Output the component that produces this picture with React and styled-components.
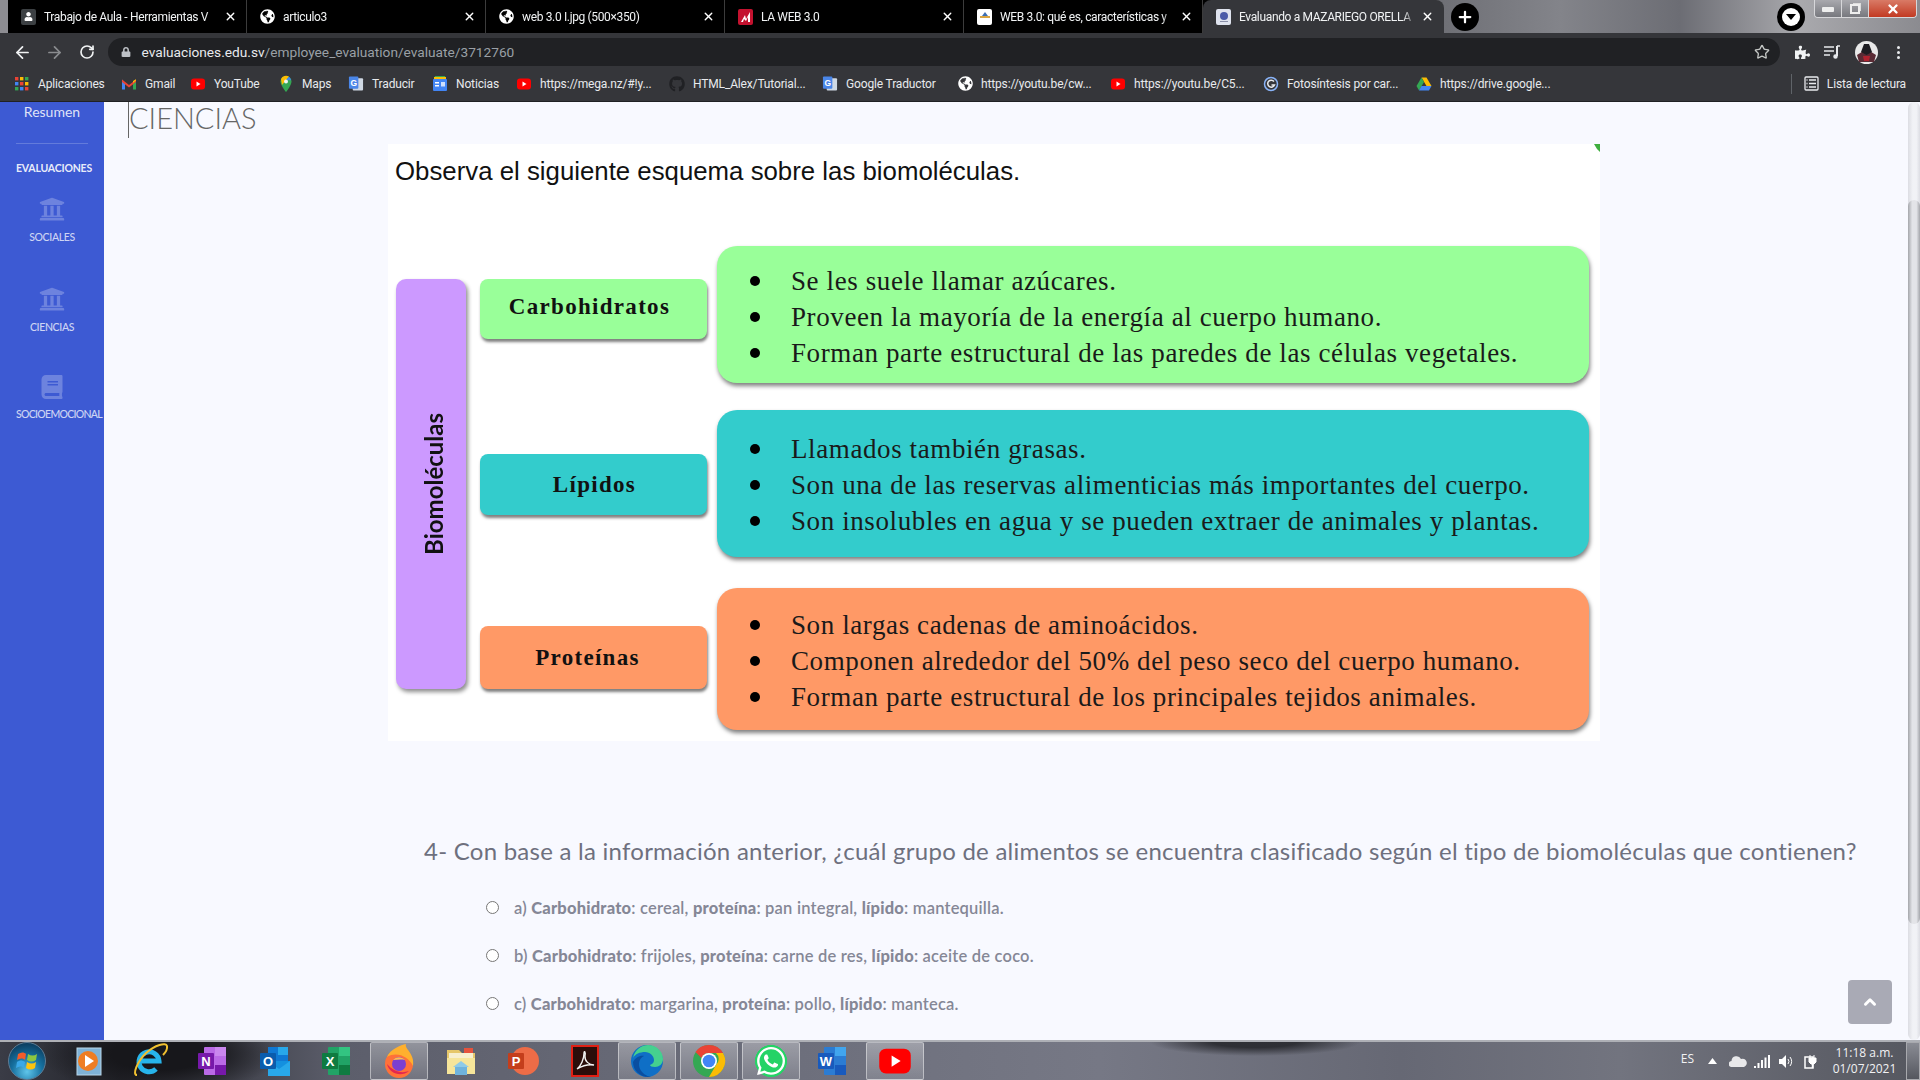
import React from "react";
import styled, { createGlobalStyle } from "styled-components";
import { ArrowLeft, ArrowRight, RotateCw, Star, X, Plus, ChevronUp } from "lucide-react";
import {
  FaUniversity,
  FaBook,
  FaGithub,
  FaGlobeAmericas,
  FaLock,
  FaPuzzlePiece,
  FaWhatsapp,
  FaUser,
} from "react-icons/fa";

const GlobalStyle = createGlobalStyle`
  html, body {
    margin: 0;
    padding: 0;
    background: #f8f9ff;
    overflow: hidden;
  }
  * { box-sizing: border-box; }
`;

const uiFont = `Roboto, "Liberation Sans", sans-serif`;
const pageFont = `Lato, "Open Sans", sans-serif`;

/* ---------- small drawn icons ---------- */

function YtIcon({ size = 16 }) {
  return (
    <svg width={size} height={size} viewBox="0 0 16 16">
      <rect x="1" y="2.5" width="14" height="11" rx="3" fill="#f00" />
      <path d="M6.5 5.5v5l4-2.5z" fill="#fff" />
    </svg>
  );
}

function AppsIcon() {
  const colors = ["#ea4335", "#fbbc05", "#34a853", "#4285f4", "#ea4335", "#fbbc05", "#34a853", "#4285f4", "#ea4335"];
  return (
    <svg width="16" height="16" viewBox="0 0 16 16">
      {colors.map((c, i) => (
        <rect key={i} x={1 + (i % 3) * 5} y={1 + Math.floor(i / 3) * 5} width="3.4" height="3.4" fill={c} />
      ))}
    </svg>
  );
}

function GmailIcon() {
  return (
    <svg width="16" height="16" viewBox="0 0 16 16">
      <path d="M1 3.5v10h3V7z" fill="#4285f4" />
      <path d="M15 3.5v10h-3V7z" fill="#34a853" />
      <path d="M1 3.5 8 9l7-5.5V6L8 11.5 1 6z" fill="#ea4335" />
      <path d="M12 7l3-2.5V3.2L12 5z" fill="#fbbc05" />
    </svg>
  );
}

function MapsIcon() {
  return (
    <svg width="16" height="18" viewBox="0 0 16 18">
      <path d="M8 1a5.5 5.5 0 0 0-5.5 5.5C2.500 10.500 8 17 8 17s5.500-6.500 5.500-10.500A5.500 5.500 0 0 0 8 1z" fill="#34a853" />
      <path d="M3 4a5.500 5.500 0 0 1 8-2.400L4 10z" fill="#fbbc05" />
      <path d="M11 1.800 8 5l5 .2a5.500 5.500 0 0 0-2-3.400z" fill="#4285f4" />
      <circle cx="8" cy="6.500" r="2" fill="#f1f3f4" />
    </svg>
  );
}

function TranslateIcon() {
  return (
    <svg width="17" height="17" viewBox="0 0 17 17">
      <rect x="5" y="3" width="11" height="13" rx="1" fill="#cfd8e3" />
      <rect x="1" y="1" width="10" height="13" rx="1" fill="#4a86e8" />
      <text x="6" y="11" fontSize="9" fontWeight="700" fill="#fff" textAnchor="middle" fontFamily="Liberation Sans">G</text>
    </svg>
  );
}

function NewsIcon() {
  return (
    <svg width="16" height="17" viewBox="0 0 16 17">
      <path d="M3 1h10l1 4H2z" fill="#34a853" />
      <path d="M2 2h12v3H2z" fill="#fbbc05" />
      <rect x="1" y="4" width="14" height="12" rx="1" fill="#4285f4" />
      <rect x="3" y="7" width="4" height="1.500" fill="#fff" />
      <rect x="3" y="10" width="4" height="1.500" fill="#fff" />
      <rect x="9" y="7" width="4" height="4.500" fill="#cfe0fc" />
    </svg>
  );
}

function GoogleLensIcon() {
  return (
    <svg width="16" height="16" viewBox="0 0 16 16" fill="none">
      <circle cx="8" cy="8" r="6.500" stroke="#8ab4f8" strokeWidth="1.500" />
      <path d="M11 5.500A3.500 3.500 0 1 0 11.500 9H8.500" stroke="#e8eaed" strokeWidth="1.500" />
    </svg>
  );
}

function DriveIcon() {
  return (
    <svg width="16" height="16" viewBox="0 0 16 16">
      <path d="M5.500 1.500h5L15.500 10h-5z" fill="#fbbc05" />
      <path d="M5.500 1.500 .5 10 3 14.500 8 6z" fill="#34a853" />
      <path d="M3 14.500h10l2.500-4.500h-10z" fill="#4285f4" />
    </svg>
  );
}

function ReadingIcon() {
  return (
    <svg width="15" height="15" viewBox="0 0 15 15" fill="none" stroke="#e8eaed" strokeWidth="1.300">
      <rect x="1" y="1" width="13" height="13" rx="1" />
      <path d="M5 4h7M5 7.500h7M5 11h7M2.500 4h1M2.500 7.500h1M2.500 11h1" />
    </svg>
  );
}

function MediaIcon() {
  return (
    <svg width="16" height="14" viewBox="0 0 16 14" fill="none" stroke="#e8eaed" strokeWidth="1.500">
      <path d="M0 2h10M0 6h10M0 10h6" />
      <path d="M13 1v10" strokeWidth="2" />
      <circle cx="11.500" cy="11.500" r="1.500" fill="#e8eaed" />
      <path d="M13 1h3" />
    </svg>
  );
}

function Avatar() {
  return (
    <AvatarWrap>
      <svg width="23" height="23" viewBox="0 0 23 23">
        <circle cx="11.500" cy="11.500" r="11.500" fill="#e9e9e9" />
        <path d="M2 14 11.500 8 21 14l-2 7H4z" fill="#5a2b35" />
        <path d="M9 3h5l3 8-5.500 3L6 11z" fill="#1d1d22" />
        <path d="M8 15h7l-1 5H9z" fill="#b0222f" />
      </svg>
    </AvatarWrap>
  );
}

function OfficeIcon({ letter, dark, mid, light, round }) {
  return (
    <svg width="34" height="34" viewBox="0 0 34 34">
      {round ? (
        <circle cx="19" cy="17" r="14" fill={mid} />
      ) : (
        <>
          <rect x="8" y="3" width="22" height="28" rx="1" fill={mid} />
          <rect x="19" y="3" width="11" height="9" fill={light} />
          <rect x="19" y="21" width="11" height="10" fill={dark} />
        </>
      )}
      <rect x="2" y="9" width="16" height="16" rx="1" fill={dark} />
      <text x="10" y="22" fontSize="13" fontWeight="700" fill="#fff" textAnchor="middle" fontFamily="Liberation Sans">
        {letter}
      </text>
    </svg>
  );
}

function OutlookIcon() {
  return (
    <svg width="34" height="34" viewBox="0 0 34 34">
      <rect x="10" y="3" width="20" height="16" fill="#0f78d4" />
      <rect x="20" y="3" width="10" height="8" fill="#28a8ea" />
      <path d="M10 17h22v15H10z" fill="#1490df" />
      <path d="M10 17 21 25l11-8v15H10z" fill="#28a8ea" />
      <rect x="2" y="9" width="16" height="16" rx="1" fill="#0a5cad" />
      <text x="10" y="22" fontSize="13" fontWeight="700" fill="#fff" textAnchor="middle" fontFamily="Liberation Sans">O</text>
    </svg>
  );
}

function FirefoxIcon() {
  return (
    <svg width="36" height="36" viewBox="0 0 36 36">
      <circle cx="18" cy="21" r="14" fill="#ff7139" />
      <path d="M6 14C9 6 20 2 25 1c-2 5 9 9 7 22C28 14 16 8 6 14z" fill="#ffb02e" />
      <path d="M6 21c2 9 14 14 22 7-8 3-16 0-22-7z" fill="#e22850" />
      <circle cx="18" cy="21" r="7" fill="#7b3fd1" />
      <path d="M12 17c4-4 9-3 12 0-4-1-8 0-12 0z" fill="#ffbd4f" />
    </svg>
  );
}

function ExplorerIcon() {
  return (
    <svg width="34" height="34" viewBox="0 0 34 34">
      <path d="M3 6h12l3 3h13v21H3z" fill="#e6c76a" />
      <path d="M5 9h24v6H5z" fill="#f7efcf" />
      <rect x="20" y="4" width="9" height="5" fill="#e5533d" />
      <path d="M3 14h28v16H3z" fill="#f6e59a" />
      <path d="M11 22h12v9H11z" fill="#6fb3dd" />
      <path d="M9 23l8-6 8 6z" fill="#8ecbe9" />
    </svg>
  );
}

function AcrobatIcon() {
  return (
    <svg width="30" height="34" viewBox="0 0 30 34">
      <rect x="2" y="2" width="26" height="30" fill="#2b0d0a" stroke="#e01f14" strokeWidth="2" />
      <path d="M7 25c4-3 7-10 7-16 0-3 2-1 1 3-.5 5 4 9 9 9-6-1-12 1-17 4z" fill="none" stroke="#f4f4f4" strokeWidth="1.300" />
    </svg>
  );
}

function EdgeIcon() {
  return (
    <svg width="36" height="36" viewBox="0 0 36 36">
      <circle cx="18" cy="18" r="16" fill="#0f6fc6" />
      <path d="M4 15C6 6 13 2 19 2c9 0 15 7 15 14 0 5-4 8-8 8-3 0-5-1-5-2 3-1 4-3 4-5 0-4-4-8-9-8S6 11 4 15z" fill="#45d08f" />
      <path d="M15 13c-5 2-6 8-4 13 2 4 6 7 11 8-10 1-18-6-18-15 2-4 7-7 11-6z" fill="#0a4ea0" />
    </svg>
  );
}

function ChromeIcon() {
  return (
    <svg width="36" height="36" viewBox="0 0 36 36">
      <circle cx="18" cy="18" r="16" fill="#34a853" />
      <path d="M18 2a16 16 0 0 1 14 8H18a8 8 0 0 0-7.500 5L4.500 9A16 16 0 0 1 18 2z" fill="#ea4335" />
      <path d="M32 10a16 16 0 0 1-14 24l7-12a8 8 0 0 0 0-12z" fill="#fbbc05" />
      <circle cx="18" cy="18" r="8" fill="#fff" />
      <circle cx="18" cy="18" r="6.300" fill="#4285f4" />
    </svg>
  );
}

function Tray({ kind }) {
  if (kind === "arrow") {
    return (
      <svg width="9" height="6" viewBox="0 0 9 6">
        <path d="M0 6 4.500 0 9 6z" fill="#fff" />
      </svg>
    );
  }
  if (kind === "cloud") {
    return (
      <svg width="18" height="12" viewBox="0 0 18 12">
        <path d="M3 12a3 3 0 0 1-.5-6A5 5 0 0 1 12 4a4 4 0 0 1 3 8z" fill="#e8e8ea" />
      </svg>
    );
  }
  if (kind === "signal") {
    return (
      <svg width="16" height="13" viewBox="0 0 16 13" fill="#fff">
        <rect x="0" y="11" width="2" height="2" />
        <rect x="3.500" y="8" width="2" height="5" />
        <rect x="7" y="5" width="2" height="8" />
        <rect x="10.500" y="2.500" width="2" height="10.500" />
        <rect x="14" y="0" width="2" height="13" />
      </svg>
    );
  }
  if (kind === "sound") {
    return (
      <svg width="15" height="15" viewBox="0 0 15 15" fill="none">
        <path d="M1 5h3l4-4v13l-4-4H1z" fill="#fff" />
        <path d="M10 5a4 4 0 0 1 0 5M12 3a7 7 0 0 1 0 9" stroke="#fff" />
      </svg>
    );
  }
  return (
    <svg width="15" height="15" viewBox="0 0 15 15" fill="none">
      <path d="M2 3h8v11H2z" stroke="#fff" strokeWidth="1.500" />
      <path d="M7 1v3M11 1v3M6 4h7v4l-2 2H8L6 8z" fill="#fff" stroke="#fff" />
      <path d="M9.500 10v4" stroke="#fff" strokeWidth="1.500" />
    </svg>
  );
}

/* ---------- data ---------- */

const tabs = [
  { title: "Trabajo de Aula - Herramientas V", icon: "person" },
  { title: "articulo3", icon: "globe" },
  { title: "web 3.0 I.jpg (500×350)", icon: "globe" },
  { title: "LA WEB 3.0", icon: "red" },
  { title: "WEB 3.0: qué es, características y", icon: "white" },
  { title: "Evaluando a MAZARIEGO ORELLA", icon: "seal", active: true },
];

const bookmarks = [
  { label: "Aplicaciones", icon: <AppsIcon />, w: 107 },
  { label: "Gmail", icon: <GmailIcon />, w: 69 },
  { label: "YouTube", icon: <YtIcon />, w: 88 },
  { label: "Maps", icon: <MapsIcon />, w: 70 },
  { label: "Traducir", icon: <TranslateIcon />, w: 84 },
  { label: "Noticias", icon: <NewsIcon />, w: 84 },
  { label: "https://mega.nz/#!y...", icon: <YtIcon />, w: 153 },
  { label: "HTML_Alex/Tutorial...", icon: <FaGithub size={16} color="#202124" />, w: 153 },
  { label: "Google Traductor", icon: <TranslateIcon />, w: 135 },
  { label: "https://youtu.be/cw...", icon: <FaGlobeAmericas size={15} color="#fff" />, w: 153 },
  { label: "https://youtu.be/C5...", icon: <YtIcon />, w: 153 },
  { label: "Fotosíntesis por car...", icon: <GoogleLensIcon />, w: 153 },
  { label: "https://drive.google...", icon: <DriveIcon />, w: 150 },
];

const sideItems = [
  { label: "SOCIALES", icon: <FaUniversity size={26} /> },
  { label: "CIENCIAS", icon: <FaUniversity size={26} /> },
  { label: "SOCIOEMOCIONAL", icon: <FaBook size={24} />, wide: true },
];

const groups = [
  {
    name: "Carbohidratos",
    color: "#99ff99",
    top: 0,
    height: 137,
    offset: 33,
    nameHeight: 60,
    nudgeX: -4,
    nudgeY: -2,
    pad: 5,
    points: [
      "Se les suele llamar azúcares.",
      "Proveen la mayoría de la energía al cuerpo humano.",
      "Forman parte estructural de las paredes de las células vegetales.",
    ],
  },
  {
    name: "Lípidos",
    color: "#33cccc",
    top: 27,
    height: 147,
    offset: 44,
    nameHeight: 61,
    nudgeX: 1,
    nudgeY: 0,
    pad: 3,
    points: [
      "Llamados también grasas.",
      "Son una de las reservas alimenticias más importantes del cuerpo.",
      "Son insolubles en agua y se pueden extraer de animales y plantas.",
    ],
  },
  {
    name: "Proteínas",
    color: "#ff9966",
    top: 31,
    height: 142,
    offset: 38,
    nameHeight: 63,
    nudgeX: -6,
    nudgeY: 0,
    pad: 3,
    points: [
      "Son largas cadenas de aminoácidos.",
      "Componen alrededor del 50% del peso seco del cuerpo humano.",
      "Forman parte estructural de los principales tejidos animales.",
    ],
  },
];

const options = [
  { letter: "a)", carb: "cereal", prot: "pan integral", lip: "mantequilla" },
  { letter: "b)", carb: "frijoles", prot: "carne de res", lip: "aceite de coco" },
  { letter: "c)", carb: "margarina", prot: "pollo", lip: "manteca" },
];

const taskbarApps = [
  { key: "wmp", el: <MediaPlayer /> },
  { key: "ie", el: <IeIcon /> },
  { key: "one", el: <OfficeIcon letter="N" dark="#7719aa" mid="#ba6ae6" light="#ca87ee" /> },
  { key: "out", el: <OutlookIcon /> },
  { key: "xls", el: <OfficeIcon letter="X" dark="#0f7b41" mid="#21a366" light="#33c481" /> },
  { key: "ff", el: <FirefoxIcon />, active: true },
  { key: "exp", el: <ExplorerIcon /> },
  { key: "ppt", el: <OfficeIcon letter="P" dark="#c43e1c" mid="#ed6c47" light="#ff8f6b" round /> },
  { key: "pdf", el: <AcrobatIcon /> },
  { key: "edge", el: <EdgeIcon />, active: true },
  { key: "chr", el: <ChromeIcon />, active: true },
  { key: "wa", el: <WaIcon />, active: true },
  { key: "word", el: <OfficeIcon letter="W" dark="#185abd" mid="#2b7cd3" light="#41a5ee" /> },
  { key: "yt", el: <YtIcon size={36} />, active: true },
];

function MediaPlayer() {
  return (
    <svg width="30" height="32" viewBox="0 0 30 32">
      <rect x="3" y="3" width="24" height="27" fill="#7fb2d6" stroke="#b9d7ea" />
      <circle cx="14" cy="16" r="10" fill="#ee7d23" />
      <path d="M11 10v12l9-6z" fill="#fff" />
    </svg>
  );
}

function IeIcon() {
  return (
    <svg width="38" height="38" viewBox="0 0 38 38" fill="none">
      <path d="M6 19h21a10 10 0 1 0-3 8" stroke="#27b4ea" strokeWidth="5" />
      <path d="M5 33C0 33 5 20 14 11 23 3 34 0 35 4c.5 3-2 7-4 9" stroke="#f0c030" strokeWidth="2" />
    </svg>
  );
}

function WaIcon() {
  return (
    <WaBadge>
      <FaWhatsapp size={32} color="#fff" />
    </WaBadge>
  );
}

function TabFavicon({ kind }) {
  if (kind === "globe") return <FaGlobeAmericas size={15} color="#fff" />;
  if (kind === "person") {
    return (
      <FavBox $bg="#3c4043">
        <FaUser size={9} color="#fff" />
      </FavBox>
    );
  }
  if (kind === "red") {
    return (
      <FavBox $bg="#c4122f">
        <svg width="12" height="12" viewBox="0 0 12 12">
          <path d="M1 11 5 4l1 4 4-7v10H8V6L6 10 4 8l-1 3z" fill="#fff" />
        </svg>
      </FavBox>
    );
  }
  if (kind === "white") {
    return (
      <FavBox $bg="#fff">
        <svg width="14" height="14" viewBox="0 0 14 14">
          <path d="M7 2 4 6h6z" fill="#3d6fb4" />
          <rect x="2" y="6" width="10" height="2" fill="#d9a441" />
        </svg>
      </FavBox>
    );
  }
  return (
    <FavBox $bg="#dfe3ee">
      <svg width="12" height="12" viewBox="0 0 12 12">
        <circle cx="6" cy="5" r="4" fill="#4a5aa8" />
        <rect x="2" y="10" width="8" height="1" fill="#8a8fa8" />
      </svg>
    </FavBox>
  );
}

/* ---------- app ---------- */

export default function App() {
  return (
    <Screen>
      <GlobalStyle />

      <TabStrip>
        {tabs.map((t) => (
          <Tab key={t.title} $active={t.active}>
            <TabFavicon kind={t.icon} />
            <TabTitle>{t.title}</TabTitle>
            <TabClose>
              <X size={13} strokeWidth={2.5} />
            </TabClose>
          </Tab>
        ))}
        <RoundButton>
          <Plus size={18} strokeWidth={3} />
        </RoundButton>
        <StripSpacer />
        <RoundButton>
          <SearchTabsDot />
        </RoundButton>
        <WindowControls>
          <WinButton>
            <MinBar />
          </WinButton>
          <WinButton>
            <MaxBox />
          </WinButton>
          <WinButton $close>
            <X size={14} strokeWidth={4} color="#fff" />
          </WinButton>
        </WindowControls>
      </TabStrip>

      <Toolbar>
        <NavButton>
          <ArrowLeft size={19} strokeWidth={2.2} />
        </NavButton>
        <NavButton $dim>
          <ArrowRight size={19} strokeWidth={2.2} />
        </NavButton>
        <NavButton>
          <RotateCw size={16} strokeWidth={2.5} />
        </NavButton>
        <Omnibox>
          <FaLock size={10} color="#bdc1c6" />
          <UrlText>
            evaluaciones.edu.sv<UrlRest>/employee_evaluation/evaluate/3712760</UrlRest>
          </UrlText>
          <Star size={16} color="#c4c7c5" />
        </Omnibox>
        <ToolIcons>
          <FaPuzzlePiece size={15} color="#f1f3f4" />
          <MediaIcon />
          <Avatar />
          <MenuDots>
            <i />
            <i />
            <i />
          </MenuDots>
        </ToolIcons>
      </Toolbar>

      <BookmarkBar>
        {bookmarks.map((b) => (
          <Bookmark key={b.label} $w={b.w}>
            <BookmarkIcon>{b.icon}</BookmarkIcon>
            {b.label}
          </Bookmark>
        ))}
        <ReadingList>
          <ReadingIcon />
          Lista de lectura
        </ReadingList>
      </BookmarkBar>

      <Body>
        <Sidebar>
          <Resumen>Resumen</Resumen>
          <SideDivider />
          <SideHeading>EVALUACIONES</SideHeading>
          {sideItems.map((s) => (
            <SideItem key={s.label}>
              {s.icon}
              <SideLabel $wide={s.wide}>{s.label}</SideLabel>
            </SideItem>
          ))}
        </Sidebar>

        <Content>
          <PageTitle>CIENCIAS</PageTitle>

          <Figure>
            <FigureMark />
            <FigureTitle>Observa el siguiente esquema sobre las biomoléculas.</FigureTitle>
            <Diagram>
              <VerticalBar>
                <VerticalText>Biomoléculas</VerticalText>
              </VerticalBar>
              <Groups>
                {groups.map((g) => (
                  <GroupRow key={g.name} $top={g.top}>
                    <GroupName $color={g.color} $offset={g.offset} $height={g.nameHeight}>
                      <GroupNameText $x={g.nudgeX} $y={g.nudgeY}>
                        {g.name}
                      </GroupNameText>
                    </GroupName>
                    <GroupBox $color={g.color} $height={g.height} $pad={g.pad}>
                      {g.points.map((p) => (
                        <Point key={p}>{p}</Point>
                      ))}
                    </GroupBox>
                  </GroupRow>
                ))}
              </Groups>
            </Diagram>
          </Figure>

          <Question>
            4- Con base a la información anterior, ¿cuál grupo de alimentos se encuentra clasificado según el tipo de
            biomoléculas que contienen?
          </Question>

          <Options>
            {options.map((o) => (
              <OptionRow key={o.letter}>
                <Radio type="radio" name="q4" />
                <OptionText>
                  {o.letter} <b>Carbohidrato</b>: {o.carb}, <b>proteína</b>: {o.prot}, <b>lípido</b>: {o.lip}.
                </OptionText>
              </OptionRow>
            ))}
          </Options>

          <ScrollTop>
            <ChevronUp size={18} strokeWidth={4} color="#fff" />
          </ScrollTop>
        </Content>

        <ScrollTrack>
          <ScrollThumb />
        </ScrollTrack>
      </Body>

      <Taskbar>
        <StartSlot>
          <StartOrb>
            <svg width="22" height="20" viewBox="0 0 22 20">
              <path d="M2 3c3-2 6-2 8 0l-1 6C7 7 4 7 1 9z" fill="#f25c2a" />
              <path d="M12 3c3 2 6 2 9 0l-1 6c-3 2-6 2-9 0z" fill="#8cc63f" />
              <path d="M1 11c3-2 5-2 8 0l-1 6c-2-2-5-2-8 0z" fill="#3aa8e8" />
              <path d="M11 11c3 2 6 2 9 0l-1 6c-3 2-6 2-9 0z" fill="#fdc30f" />
            </svg>
          </StartOrb>
        </StartSlot>
        {taskbarApps.map((a) => (
          <AppTile key={a.key} $active={a.active}>
            {a.el}
          </AppTile>
        ))}
        <StripSpacer />
        <Lang>ES</Lang>
        <TraySlot $w={27}>
          <Tray kind="arrow" />
        </TraySlot>
        <TraySlot $w={24}>
          <Tray kind="cloud" />
        </TraySlot>
        <TraySlot $w={24}>
          <Tray kind="signal" />
        </TraySlot>
        <TraySlot $w={23}>
          <Tray kind="sound" />
        </TraySlot>
        <TraySlot $w={27}>
          <Tray kind="power" />
        </TraySlot>
        <Clock>
          <span>11:18 a.m.</span>
          <span>01/07/2021</span>
        </Clock>
        <ShowDesktop />
      </Taskbar>
    </Screen>
  );
}

/* ---------- styles ---------- */

const Screen = styled.div`
  width: 1920px;
  height: 1080px;
  display: flex;
  flex-direction: column;
  overflow: hidden;
  font-family: ${uiFont};
`;

const TabStrip = styled.div`
  height: 33px;
  flex: none;
  display: flex;
  align-items: stretch;
  padding-left: 8px;
  background: linear-gradient(90deg, #8d8d92 0 8px, #000 8px 1203px, #6f7076 1444px, #83848a 1560px, #6c6d74 1680px, #a9a9ad 1800px, #8b8b90 1920px);
`;

const Tab = styled.div`
  width: ${(p) => (p.$active ? "241px" : "239px")};
  display: flex;
  align-items: center;
  gap: 8px;
  padding: 0 10px 0 13px;
  color: #f1f3f4;
  font-size: 12px;
  letter-spacing: -0.35px;
  background: ${(p) => (p.$active ? "#35363a" : "#000")};
  border-radius: ${(p) => (p.$active ? "8px 8px 0 0" : "0")};
  box-shadow: ${(p) => (p.$active ? "none" : "inset -1px 0 0 #3c3c3c")};
`;

const FavBox = styled.span`
  width: 15px;
  height: 16px;
  flex: none;
  display: flex;
  align-items: center;
  justify-content: center;
  background: ${(p) => p.$bg};
  border-radius: 2px;
`;

const TabTitle = styled.span`
  flex: 1;
  min-width: 0;
  white-space: nowrap;
  mask-image: linear-gradient(90deg, #000 92%, transparent);
`;

const TabClose = styled.span`
  flex: none;
  margin-left: -4px;
  display: flex;
  color: #fff;
`;

const RoundButton = styled.span`
  width: 28px;
  height: 28px;
  flex: none;
  margin: 3px 0 0 7px;
  border-radius: 50%;
  background: #000;
  color: #fff;
  display: flex;
  align-items: center;
  justify-content: center;
`;

const SearchTabsDot = styled.span`
  width: 18px;
  height: 18px;
  border-radius: 50%;
  background: #fff;
  position: relative;
  &::after {
    content: "";
    position: absolute;
    left: 4px;
    top: 6px;
    border: 5px solid transparent;
    border-top: 6px solid #000;
  }
`;

const StripSpacer = styled.span`
  flex: 1;
`;

const WindowControls = styled.div`
  display: flex;
  margin: 0 3px 0 9px;
  height: 18px;
  border: 1px solid #d7d7da;
  border-top: none;
  border-radius: 0 0 4px 4px;
  overflow: hidden;
`;

const WinButton = styled.span`
  width: ${(p) => (p.$close ? "47px" : "27px")};
  display: flex;
  align-items: center;
  justify-content: center;
  background: ${(p) =>
    p.$close ? "linear-gradient(#d97a66, #c23a22)" : "linear-gradient(#a9a9ae, #77787e)"};
  border-right: 1px solid #d7d7da;
  &:last-child {
    border-right: none;
  }
`;

const MinBar = styled.span`
  width: 12px;
  height: 5px;
  margin-top: 2px;
  background: #eee;
  border-radius: 1px;
`;

const MaxBox = styled.span`
  width: 10px;
  height: 10px;
  border: 2px solid #eee;
  box-shadow: 2px -2px 0 -1px #ddd;
`;

const Toolbar = styled.div`
  height: 35px;
  flex: none;
  display: flex;
  align-items: center;
  padding: 3px 0 0 6px;
  background: #35363a;
`;

const NavButton = styled.span`
  width: 32.500px;
  display: flex;
  justify-content: center;
  color: ${(p) => (p.$dim ? "#8a8c8f" : "#f1f3f4")};
`;

const Omnibox = styled.div`
  width: 1672px;
  height: 28px;
  margin-left: 4px;
  display: flex;
  align-items: center;
  padding: 0 10px 0 13px;
  border-radius: 14px;
  background: #202124;
`;

const UrlText = styled.span`
  flex: 1;
  margin-left: 11px;
  font-size: 13.700px;
  color: #e8eaed;
`;

const UrlRest = styled.span`
  color: #9aa0a6;
`;

const ToolIcons = styled.div`
  flex: 1;
  display: flex;
  align-items: center;
  justify-content: space-between;
  padding: 0 20px 0 15px;
`;

const AvatarWrap = styled.span`
  display: flex;
  margin-right: 4px;
`;

const MenuDots = styled.span`
  display: flex;
  flex-direction: column;
  gap: 2px;
  i {
    width: 3px;
    height: 3px;
    border-radius: 50%;
    background: #e8eaed;
  }
`;

const BookmarkBar = styled.div`
  height: 34px;
  flex: none;
  display: flex;
  align-items: center;
  padding: 0 0 2px 14px;
  color: #e8eaed;
  font-size: 12px;
  letter-spacing: -0.15px;
  background: #35363a;
  border-bottom: 1px solid #202124;
`;

const Bookmark = styled.span`
  width: ${(p) => p.$w}px;
  flex: none;
  display: flex;
  align-items: center;
  gap: 8px;
  white-space: nowrap;
  overflow: hidden;
`;

const BookmarkIcon = styled.span`
  width: 16px;
  flex: none;
  display: flex;
  justify-content: center;
`;

const ReadingList = styled.span`
  margin-left: auto;
  height: 20px;
  display: flex;
  align-items: center;
  gap: 8px;
  padding: 0 14px 0 12px;
  border-left: 1px solid #5f6368;
`;

const Body = styled.div`
  flex: 1;
  min-height: 0;
  display: flex;
  background: #f8f9ff;
`;

const Sidebar = styled.nav`
  width: 104px;
  flex: none;
  display: flex;
  flex-direction: column;
  align-items: flex-start;
  padding: 0 0 0 16px;
  background: #3d5ad3;
  font-family: ${pageFont};
  color: #fff;
`;

const Resumen = styled.div`
  width: 72px;
  margin-top: 1px;
  text-align: center;
  font-size: 14px;
  line-height: 17px;
  color: rgba(255, 255, 255, 0.85);
`;

const SideDivider = styled.div`
  width: 72px;
  height: 1px;
  margin-top: 23px;
  background: rgba(255, 255, 255, 0.2);
`;

const SideHeading = styled.div`
  margin-top: 17px;
  font-size: 10.500px;
  font-weight: 700;
  line-height: 14px;
  letter-spacing: -0.2px;
  color: rgba(255, 255, 255, 0.9);
`;

const SideItem = styled.div`
  width: 72px;
  height: 89.500px;
  padding-top: 21px;
  flex: none;
  display: flex;
  flex-direction: column;
  align-items: center;
  color: rgba(255, 255, 255, 0.25);
`;

const SideLabel = styled.span`
  margin-top: 8px;
  font-size: 10.500px;
  line-height: 14px;
  font-weight: 500;
  letter-spacing: ${(p) => (p.$wide ? "-0.7px" : "-0.35px")};
  color: rgba(255, 255, 255, 0.75);
  white-space: nowrap;
  align-self: ${(p) => (p.$wide ? "flex-start" : "center")};
`;

const Content = styled.main`
  flex: 1;
  min-width: 0;
  padding-left: 24px;
  position: relative;
  font-family: ${pageFont};
  background: #f8f9ff;
`;

const PageTitle = styled.h2`
  margin: 0;
  height: 36px;
  line-height: 31px;
  font-size: 29px;
  font-weight: 300;
  color: #666;
  border-left: 1px solid #666;
`;

const Figure = styled.section`
  width: 1212px;
  height: 597px;
  margin: 6px 0 0 260px;
  padding: 9px 8px 0;
  position: relative;
  background: #fff;
`;

const FigureMark = styled.span`
  position: absolute;
  top: 0;
  right: 0;
  border: 3px solid transparent;
  border-top: 5px solid #3fae3f;
  border-right: 3px solid #3fae3f;
`;

const FigureTitle = styled.p`
  margin: 0 0 0 -1px;
  height: 36px;
  font: 25.800px/36px "Liberation Sans", sans-serif;
  color: #111;
`;

const Diagram = styled.div`
  margin-top: 57px;
  display: flex;
  gap: 14px;
`;

const VerticalBar = styled.div`
  width: 70px;
  height: 410px;
  margin-top: 33px;
  flex: none;
  display: flex;
  align-items: center;
  justify-content: center;
  border-radius: 10px;
  background: #cc99ff;
  box-shadow: 2px 3px 4px rgba(0, 0, 0, 0.45);
`;

const VerticalText = styled.span`
  writing-mode: vertical-rl;
  transform: rotate(180deg);
  margin-left: 4px;
  font: 700 24px Lato, sans-serif;
  color: #111;
`;

const Groups = styled.div`
  flex: 1;
  display: flex;
  flex-direction: column;
`;

const GroupRow = styled.div`
  display: flex;
  align-items: flex-start;
  gap: 10px;
  margin-top: ${(p) => p.$top}px;
`;

const GroupName = styled.div`
  width: 227px;
  height: ${(p) => p.$height}px;
  margin-top: ${(p) => p.$offset}px;
  flex: none;
  display: flex;
  align-items: center;
  justify-content: center;
  border-radius: 8px;
  background: ${(p) => p.$color};
  box-shadow: 1px 3px 3px rgba(0, 0, 0, 0.5);
`;

const GroupNameText = styled.span`
  transform: translate(${(p) => p.$x}px, ${(p) => p.$y}px);
  font: 700 23px "Liberation Serif", serif;
  letter-spacing: 1.300px;
  color: #111;
`;

const GroupBox = styled.ul`
  width: 872px;
  height: ${(p) => p.$height}px;
  margin: 0;
  padding: ${(p) => p.$pad}px 0 0 74px;
  list-style: none;
  display: flex;
  flex-direction: column;
  justify-content: center;
  border-radius: 20px;
  background: ${(p) => p.$color};
  box-shadow: 1px 3px 4px rgba(0, 0, 0, 0.5);
`;

const Point = styled.li`
  position: relative;
  font: 27px/36px "Liberation Serif", serif;
  letter-spacing: 0.600px;
  color: #1a1a1a;
  white-space: nowrap;
  &::before {
    content: "";
    position: absolute;
    left: -41px;
    top: 13px;
    width: 10px;
    height: 10px;
    border-radius: 50%;
    background: #000;
  }
`;

const Question = styled.h3`
  margin: 95px 0 0 296px;
  font-size: 24px;
  line-height: 30px;
  font-weight: 400;
  letter-spacing: 0.250px;
  color: #6e707e;
  white-space: nowrap;
`;

const Options = styled.div`
  margin: 18px 0 0 357px;
  display: flex;
  flex-direction: column;
`;

const OptionRow = styled.label`
  height: 48px;
  display: flex;
  align-items: center;
  gap: 15px;
`;

const Radio = styled.input`
  width: 13px;
  height: 13px;
  margin: 0 0 2px 1px;
`;

const OptionText = styled.span`
  font-size: 16.500px;
  font-weight: 600;
  letter-spacing: 0.200px;
  color: #858796;
  b {
    font-weight: 900;
  }
`;

const ScrollTop = styled.div`
  position: absolute;
  right: 16px;
  top: 878px;
  width: 44px;
  height: 44px;
  display: flex;
  align-items: center;
  justify-content: center;
  border-radius: 4px;
  background: #a9aab5;
`;

const ScrollTrack = styled.div`
  width: 12px;
  flex: none;
  padding-top: 98px;
  background: linear-gradient(90deg, #dcdde3, #f1f2f6 40%, #f1f2f6 70%, #dcdde3);
  border-radius: 6px;
`;

const ScrollThumb = styled.div`
  height: 724px;
  border-radius: 6px;
  background: linear-gradient(90deg, #a4a6ab, #e3e4e8 35%, #e3e4e8 70%, #a4a6ab);
`;

const Taskbar = styled.footer`
  height: 40px;
  flex: none;
  display: flex;
  align-items: center;
  color: #f2f2f4;
  border-top: 2px solid #aeb0b6;
  background:
    radial-gradient(ellipse 105px 14px at 1255px 0, rgba(40, 41, 46, 0.9) 0 40%, transparent 100%),
    radial-gradient(ellipse 120px 40px at 160px 12px, #17171b 0 40%, transparent 100%),
    linear-gradient(90deg, #3a3c46 0, #23242a 120px, #5c5e6b 340px, #6d6f7c 800px, #767885 1100px, #666874 1400px, #72747f 1620px, #55575f 1920px);
`;

const StartSlot = styled.div`
  width: 58px;
  flex: none;
  display: flex;
  padding-left: 8px;
`;

const StartOrb = styled.div`
  width: 38px;
  height: 38px;
  flex: none;
  display: flex;
  align-items: center;
  justify-content: center;
  border-radius: 50%;
  border: 1px solid #5d7c95;
  background: radial-gradient(circle at 50% 80%, #5fc5ea 0, #16709f 45%, #0b3c5e 85%);
`;

const AppTile = styled.div`
  width: 58px;
  height: 38px;
  margin: 0 2px;
  flex: none;
  display: flex;
  align-items: center;
  justify-content: center;
  border-radius: 2px;
  border: 1px solid ${(p) => (p.$active ? "rgba(255,255,255,0.45)" : "transparent")};
  background: ${(p) => (p.$active ? "linear-gradient(rgba(255,255,255,0.32), rgba(255,255,255,0.12))" : "none")};
`;

const WaBadge = styled.span`
  width: 36px;
  height: 36px;
  display: flex;
  align-items: center;
  justify-content: center;
  border-radius: 50%;
  background: radial-gradient(circle, #25d366 0 62%, transparent 64%);
`;

const Lang = styled.span`
  margin-right: 5px;
  font: 12px "Open Sans", sans-serif;
  padding-bottom: 5px;
`;

const TraySlot = styled.span`
  width: ${(p) => p.$w}px;
  flex: none;
  display: flex;
  justify-content: center;
`;

const Clock = styled.div`
  width: 74px;
  margin: 0 4.500px 0 3.500px;
  display: flex;
  flex-direction: column;
  align-items: center;
  font: 12px/16px "Open Sans", sans-serif;
`;

const ShowDesktop = styled.span`
  width: 14px;
  height: 38px;
  flex: none;
  border: 1px solid #a8a9ae;
  background: linear-gradient(#8a8c94, #55575f);
`;
